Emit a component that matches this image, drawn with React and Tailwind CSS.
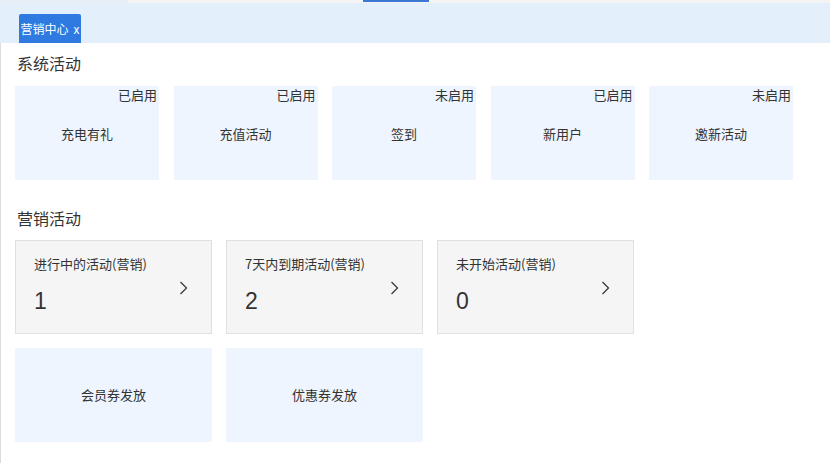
import React from "react";

const font = { fontFamily: '"Noto Sans CJK SC", "Noto Sans", sans-serif' };

const sys = [
  { name: "充电有礼", status: "已启用" },
  { name: "充值活动", status: "已启用" },
  { name: "签到", status: "未启用" },
  { name: "新用户", status: "已启用" },
  { name: "邀新活动", status: "未启用" },
];

const stats = [
  { title: "进行中的活动(营销)", value: "1" },
  { title: "7天内到期活动(营销)", value: "2" },
  { title: "未开始活动(营销)", value: "0" },
];

function Chevron() {
  return (
    <svg width="9" height="14" viewBox="0 0 9 14" className="shrink-0 self-center">
      <polyline points="1.5,1 7.5,7 1.5,13" fill="none" stroke="#333" strokeWidth="1.2" />
    </svg>
  );
}

export default function App() {
  return (
    <div className="w-[830px] h-[463px] bg-white overflow-hidden text-[#333]" style={font}>
      <div className="flex h-[3px]">
        <div className="w-[128px] bg-[#e8eef7]" />
        <div className="w-[235px] bg-[#f4f4f4]" />
        <div className="w-[66px] bg-[#f4f4f4] flex flex-col">
          <div className="h-[2px] bg-[#3a78d4]" />
        </div>
        <div className="flex-1 bg-[#f4f4f4]" />
      </div>
      <div className="h-[40px] bg-[#e3effb] flex items-end pl-[19px]">
        <div className="h-[29px] w-[62px] bg-[#2e7ae0] rounded-t-[2px] text-white text-[12px] flex items-center justify-center gap-[5px]">
          <span>营销中心</span>
          <span>x</span>
        </div>
      </div>
      <div className="border-l border-[#dcdcdc] h-[420px] pl-[14px]">
        <div className="text-[16px] leading-[20px] pt-[10px] pl-[2px]">系统活动</div>
        <div className="flex gap-[14.5px] mt-[13px]">
          {sys.map((s) => (
            <div key={s.name} className="relative w-[144px] h-[94px] bg-[#eef5fe] flex items-center justify-center text-[13px]">
              <span className="absolute top-[1px] right-[2px] leading-[16px]">{s.status}</span>
              <span className="mt-[2px]">{s.name}</span>
            </div>
          ))}
        </div>
        <div className="text-[16px] leading-[20px] mt-[28px] pl-[2px]">营销活动</div>
        <div className="flex gap-[14px] mt-[12px]">
          {stats.map((s) => (
            <div key={s.title} className="w-[197px] h-[94px] bg-[#f5f5f5] border border-[#e0e0e0] flex pl-[18px] pr-[23px] pt-[15px]">
              <div className="flex-1">
                <div className="text-[13px] leading-[16px]">{s.title}</div>
                <div className="text-[23px] leading-[28px] mt-[15px]" style={{ fontFamily: '"Liberation Sans", Arial, sans-serif' }}>{s.value}</div>
              </div>
              <div className="flex items-center pb-[14px]">
                <Chevron />
              </div>
            </div>
          ))}
        </div>
        <div className="flex gap-[14px] mt-[14px]">
          {["会员券发放", "优惠券发放"].map((t) => (
            <div key={t} className="w-[197px] h-[94px] bg-[#eef5fe] flex items-center justify-center text-[13px]">
              {t}
            </div>
          ))}
        </div>
      </div>
    </div>
  );
}
